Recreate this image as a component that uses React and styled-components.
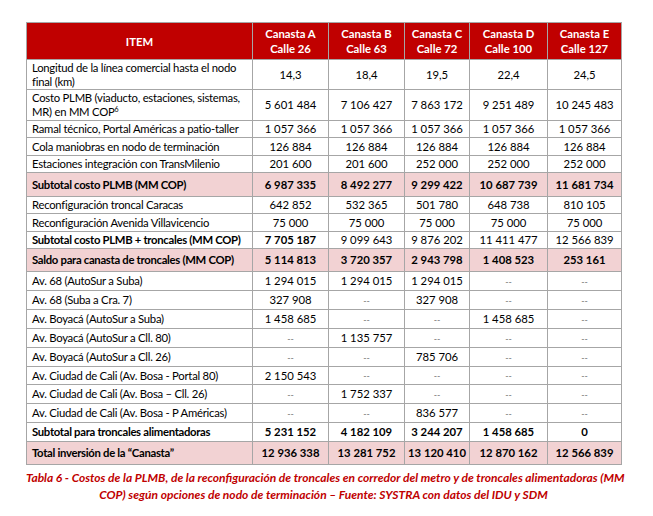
import styled, { createGlobalStyle } from 'styled-components';

const GlobalStyle = createGlobalStyle`
  body {
    margin: 0;
    background: #ffffff;
    font-family: Lato, "Liberation Sans", sans-serif;
  }
`;

const Page = styled.div`
  width: 653px;
  padding: 22px 0 0 26px;
  box-sizing: border-box;
`;

const Table = styled.table`
  border-collapse: collapse;
  table-layout: fixed;
  width: 595px;
  font-size: 11.3px;
  color: #000;
`;

const HeadCell = styled.th`
  background: #c00000;
  color: #fff;
  font-weight: 700;
  height: 36px;
  line-height: 15px;
  border: 1px solid #a6a6a6;
  text-align: center;
  padding: 0;
  white-space: nowrap;
`;

const Row = styled.tr`
  height: ${({ h }) => h}px;
  background: ${({ pink }) => (pink ? '#f2d2d3' : '#fff')};
  font-weight: ${({ bold }) => (bold ? 700 : 400)};
`;

const Label = styled.td`
  border: 1px solid #a6a6a6;
  padding: 0 0 0 5px;
  line-height: 14px;
  letter-spacing: ${({ bold }) => (bold ? '-0.3px' : '-0.25px')};
  text-align: left;
  white-space: ${({ wrap }) => (wrap ? 'normal' : 'nowrap')};
  font-weight: ${({ bold }) => (bold ? 700 : 'inherit')};
`;

const Num = styled.td`
  border: 1px solid #a6a6a6;
  padding: 0;
  line-height: 14px;
  text-align: center;
  white-space: nowrap;
  font-weight: ${({ bold }) => (bold ? 700 : 'inherit')};
`;

const Sup = styled.sup`
  font-size: 7px;
  line-height: 0;
  vertical-align: 4px;
`;

const Dash = styled.span`
  color: #777;
  font-size: 9px;
`;

const Caption = styled.p`
  width: 595px;
  margin: 4px 0 0;
  text-align: center;
  color: #c00000;
  font-weight: 700;
  font-style: italic;
  font-size: 12px;
  line-height: 17px;
  white-space: nowrap;
`;

const widths = [226, 76, 76, 65, 78, 74];

const heads = [
  ['ITEM'],
  ['Canasta A', 'Calle 26'],
  ['Canasta B', 'Calle 63'],
  ['Canasta C', 'Calle 72'],
  ['Canasta D', 'Calle 100'],
  ['Canasta E', 'Calle 127'],
];

const rows = [
  { label: 'Longitud de la línea comercial hasta el nodo final (km)', v: ['14,3', '18,4', '19,5', '22,4', '24,5'], h: 30, wrap: true },
  { label: 'costo', v: ['5 601 484', '7 106 427', '7 863 172', '9 251 489', '10 245 483'], h: 31, wrap: true },
  { label: 'Ramal técnico, Portal Américas a patio-taller', v: ['1 057 366', '1 057 366', '1 057 366', '1 057 366', '1 057 366'], h: 17 },
  { label: 'Cola maniobras en nodo de terminación', v: ['126 884', '126 884', '126 884', '126 884', '126 884'], h: 18 },
  { label: 'Estaciones integración con TransMilenio', v: ['201 600', '201 600', '252 000', '252 000', '252 000'], h: 17 },
  { label: 'Subtotal costo PLMB (MM COP)', v: ['6 987 335', '8 492 277', '9 299 422', '10 687 739', '11 681 734'], h: 24, pink: true, bold: true },
  { label: 'Reconfiguración troncal Caracas', v: ['642 852', '532 365', '501 780', '648 738', '810 105'], h: 17 },
  { label: 'Reconfiguración Avenida Villavicencio', v: ['75 000', '75 000', '75 000', '75 000', '75 000'], h: 18 },
  { label: 'Subtotal costo PLMB + troncales (MM COP)', v: ['7 705 187', '9 099 643', '9 876 202', '11 411 477', '12 566 839'], h: 17, labelBold: true, firstBold: true },
  { label: 'Saldo para canasta de troncales (MM COP)', v: ['5 114 813', '3 720 357', '2 943 798', '1 408 523', '253 161'], h: 23, pink: true, bold: true },
  { label: 'Av. 68 (AutoSur a Suba)', v: ['1 294 015', '1 294 015', '1 294 015', '--', '--'], h: 19 },
  { label: 'Av. 68 (Suba a Cra. 7)', v: ['327 908', '--', '327 908', '--', '--'], h: 19 },
  { label: 'Av. Boyacá (AutoSur a Suba)', v: ['1 458 685', '--', '--', '1 458 685', '--'], h: 19 },
  { label: 'Av. Boyacá (AutoSur a Cll. 80)', v: ['--', '1 135 757', '--', '--', '--'], h: 19 },
  { label: 'Av. Boyacá (AutoSur a Cll. 26)', v: ['--', '--', '785 706', '--', '--'], h: 19 },
  { label: 'Av. Ciudad de Cali (Av. Bosa - Portal 80)', v: ['2 150 543', '--', '--', '--', '--'], h: 18 },
  { label: 'Av. Ciudad de Cali (Av. Bosa – Cll. 26)', v: ['--', '1 752 337', '--', '--', '--'], h: 19 },
  { label: 'Av. Ciudad de Cali (Av. Bosa - P Américas)', v: ['--', '--', '836 577', '--', '--'], h: 19 },
  { label: 'Subtotal para troncales alimentadoras', v: ['5 231 152', '4 182 109', '3 244 207', '1 458 685', '0'], h: 19, bold: true },
  { label: 'Total inversión de la “Canasta”', v: ['12 936 338', '13 281 752', '13 120 410', '12 870 162', '12 566 839'], h: 23, pink: true, bold: true },
];

const App = () => {
  return (
    <Page>
      <GlobalStyle />
      <Table>
        <colgroup>
          {widths.map((w, i) => (
            <col key={i} style={{ width: w }} />
          ))}
        </colgroup>
        <thead>
          <tr>
            {heads.map((h, i) => (
              <HeadCell key={i}>
                {h.map((line, j) => (
                  <div key={j}>{line}</div>
                ))}
              </HeadCell>
            ))}
          </tr>
        </thead>
        <tbody>
          {rows.map((r, i) => (
            <Row key={i} h={r.h} pink={r.pink} bold={r.bold}>
              <Label bold={r.labelBold || r.bold} wrap={r.wrap}>
                {r.label === 'costo' ? (
                  <>
                    Costo PLMB (viaducto, estaciones, sistemas, MR) en MM COP<Sup>6</Sup>
                  </>
                ) : (
                  r.label
                )}
              </Label>
              {r.v.map((v, j) => (
                <Num key={j} bold={r.firstBold && j === 0}>
                  {v === '--' ? <Dash>--</Dash> : v}
                </Num>
              ))}
            </Row>
          ))}
        </tbody>
      </Table>
      <Caption>
        Tabla 6 - Costos de la PLMB, de la reconfiguración de troncales en corredor del metro y de troncales alimentadoras (MM
        <br />
        COP) según opciones de nodo de terminación – Fuente: SYSTRA con datos del IDU y SDM
      </Caption>
    </Page>
  );
};

export default App;
